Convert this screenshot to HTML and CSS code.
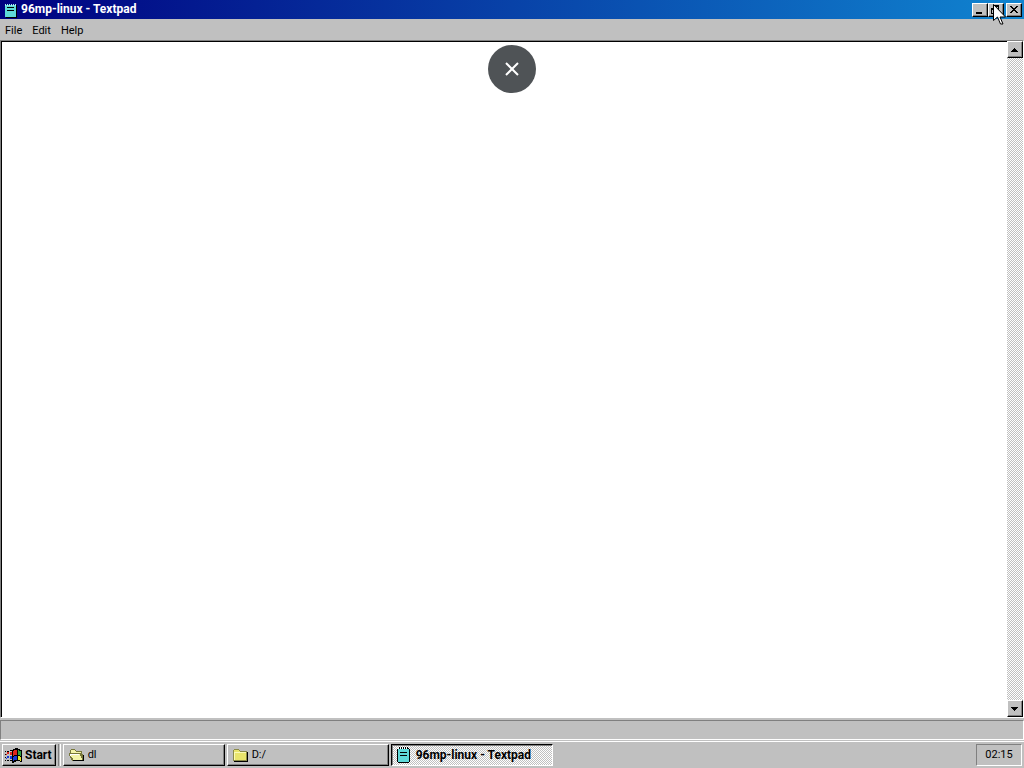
FILE: index.html
```html
<!DOCTYPE html>
<html lang="en">
<head>
    <meta charset="UTF-8">
    <meta name="viewport" content="width=device-width, initial-scale=1.0">
    <title>96mp-linux - Textpad</title>
    <link rel="stylesheet" href="styles.css">
</head>
<body>
    <main class="window">
        <header class="title-bar">
            <svg class="pad-icon" viewBox="0 0 14 16" shape-rendering="crispEdges">
                <path fill="#000" d="M2 3h11v13H2z"/>
                <path fill="#5fd9d9" d="M1 3h11v12H1z"/>
                <path fill="#a8ecec" d="M1 2h1v2H1zM3 2h1v2H3zM5 2h1v2H5zM7 2h1v2H7zM9 2h1v2H9zM11 2h1v2h-1z"/>
                <path fill="#000" d="M3 5h7v1H3zM3 8h7v1H3z"/>
            </svg>
            <h1 class="title">96mp-linux - Textpad</h1>
            <div class="window-buttons">
                <button class="raised window-button" aria-label="Minimize">
                    <svg viewBox="0 0 12 10" shape-rendering="crispEdges"><path d="M2 7h6v2H2z"/></svg>
                </button>
                <button class="raised window-button" aria-label="Restore">
                    <svg viewBox="0 0 12 10" shape-rendering="crispEdges"><path d="M3 0h6v6H7V5h1V2H4v1H3zM1 3h6v6H1zM2 5v3h4V5z" fill-rule="evenodd"/></svg>
                </button>
                <button class="raised window-button close" aria-label="Close">
                    <svg viewBox="0 0 12 10" shape-rendering="crispEdges"><path d="M2 1h2v1H2zM8 1h2v1H8zM3 2h2v1H3zM7 2h2v1H7zM4 3h4v1H4zM5 4h2v1H5zM4 5h4v1H4zM3 6h2v1H3zM7 6h2v1H7zM2 7h2v1H2zM8 7h2v1H8z"/></svg>
                </button>
            </div>
        </header>

        <nav class="menu-bar">
            <button class="menu">File</button>
            <button class="menu">Edit</button>
            <button class="menu">Help</button>
        </nav>

        <div class="editor">
            <textarea class="text" aria-label="Document text" spellcheck="false"></textarea>
            <div class="scrollbar">
                <button class="raised scroll-button" aria-label="Scroll up">
                    <svg viewBox="0 0 12 12" shape-rendering="crispEdges"><path d="M5 4h1v1h1v1h1v1h1v1H2V7h1V6h1V5h1z"/></svg>
                </button>
                <button class="raised scroll-button" aria-label="Scroll down">
                    <svg viewBox="0 0 12 12" shape-rendering="crispEdges"><path d="M2 4h7v1H8v1H7v1H6v1H5V7H4V6H3V5H2z"/></svg>
                </button>
            </div>
        </div>

        <div class="status-bar"></div>
    </main>

    <footer class="taskbar">
        <button class="raised start">
            <svg class="flag" viewBox="0 0 17 15" shape-rendering="crispEdges">
                <path fill="#000" d="M7 2h1V1h2V0h3v1h2v1h2v12h-2v-1h-4v1H9v1H7zM0 3h1v1H0zM2 3h2v1H2zM0 6h1v1H0zM0 9h1v1H0zM0 12h1v1H0zM2 12h2v1H2zM5 2h2v1H5zM5 12h2v1H5z"/>
                <path fill="#e0241c" d="M8 3h1V2h3v5H9v1H8zM5 4h2v3H5zM2 4h2v2H2zM1 6h1v1H1z"/>
                <path fill="#2ea043" d="M13 2h1v1h2v5h-1V7h-2z"/>
                <path fill="#1838d8" d="M8 9h1V8h3v4H9v1H8zM5 8h2v3H5zM2 8h2v2H2zM1 10h1v1H1z"/>
                <path fill="#e8e428" d="M13 8h2v1h1v4h-1v-1h-2z"/>
            </svg>
            <span>Start</span>
        </button>
        <span class="divider"></span>
        <div class="tasks">
            <button class="raised task">
                <svg class="folder" viewBox="0 0 17 14" shape-rendering="crispEdges">
                    <path fill="#77773a" d="M3 1h4v1h1v1h6v3h1v7H4v-1H3v-2H2V8H1V5h1V2h1z"/>
                    <path fill="#f4f4a8" d="M3 2h4v1h1v1h5v1H3zM2 6h10v2h1v2h1v2H5v-2H4V9H3V7H2z"/>
                    <path fill="#fff" d="M2 6h9v1H3v1H2z"/>
                    <path fill="#000" d="M5 13h11V7h-1v5H5z"/>
                </svg>
                <span>dl</span>
            </button>
            <button class="raised task">
                <svg class="folder" viewBox="0 0 17 14" shape-rendering="crispEdges">
                    <path fill="#8a8a48" d="M2 1h5v1h1v1h7v10H1V2h1z"/>
                    <path fill="#e9e56c" d="M2 2h5v1h1v1h6v8H2z"/>
                    <path fill="#fbfbb8" d="M2 4h12v1H3v7H2z"/>
                    <path fill="#000" d="M15 4h1v10H2v-1h13z"/>
                </svg>
                <span>D:/</span>
            </button>
            <button class="task active" aria-pressed="true">
                <svg class="task-pad" viewBox="0 0 15 18" shape-rendering="crispEdges">
                    <path fill="#000" d="M2 2h11v1h1v13h-1v1H2v-1H1V3h1z"/>
                    <path fill="#5fd9d9" d="M2 3h11v13H2z"/>
                    <path fill="#000" d="M3 1h1v2H3zM5 1h1v2H5zM7 1h1v2H7zM9 1h1v2H9zM11 1h1v2h-1zM4 6h7v1H4zM4 9h7v1H4z"/>
                    <path fill="#fff" d="M2 2h1v1H2zM4 2h1v1H4zM6 2h1v1H6zM8 2h1v1H8zM10 2h1v1h-1z"/>
                </svg>
                <span>96mp-linux - Textpad</span>
            </button>
        </div>
        <time class="clock">02:15</time>
    </footer>

    <button class="exit" aria-label="Exit full screen">
        <svg viewBox="0 0 16 16"><path d="M2 2l12 12M14 2L2 14"/></svg>
    </button>

    <svg class="cursor" viewBox="0 0 13 21">
        <path fill="#fff" stroke="#000" d="M.5 .5v16l4-3.500l3 7h2.500l-3-7h5.500z"/>
    </svg>
</body>
</html>
```

FILE: styles.css
```css
* {
    box-sizing: border-box;
}
body {
    margin: 0;
    height: 100vh;
    display: flex;
    flex-direction: column;
    overflow: hidden;
    background: #c0c0c0;
    color: #000;
    font: 11px/14px Roboto, "Liberation Sans", Arial, sans-serif;
}
button {
    margin: 0;
    padding: 0;
    border: 0;
    background: #c0c0c0;
    color: #000;
    font: inherit;
}
svg {
    display: block;
    flex: none;
}
.raised {
    border: 1px solid;
    border-color: #fff #000 #000 #fff;
    box-shadow: inset -1px -1px #808080;
}
.window {
    flex: 1;
    min-height: 0;
    display: flex;
    flex-direction: column;
}

/* title bar */
.title-bar {
    display: flex;
    align-items: center;
    height: 19px;
    padding: 0 2px 0 4px;
    background: linear-gradient(to right, #000080, #1084d0);
    color: #fff;
}
.pad-icon {
    width: 14px;
    height: 16px;
}
.title {
    flex: 1;
    margin: 0 0 0 3px;
    padding-bottom: 1px;
    font-size: 12px;
    font-weight: bold;
}
.window-buttons {
    display: flex;
}
.window-button {
    width: 16px;
    height: 14px;
    padding: 1px;
}
.window-button svg {
    width: 12px;
    height: 10px;
}
.close {
    margin-left: 2px;
}

/* menu */
.menu-bar {
    display: flex;
    height: 21px;
}
.menu {
    padding: 2px 5px 0;
}

/* editor */
.editor {
    flex: 1;
    min-height: 0;
    display: flex;
    border: 1px solid;
    border-color: #808080 #fff #fff #808080;
}
.text {
    flex: 1;
    min-width: 0;
    border: 0;
    border-top: 1px solid #000;
    border-left: 1px solid #000;
    padding: 2px;
    outline: 0;
    resize: none;
    background: #fff;
    font: inherit;
}
.scrollbar {
    display: flex;
    flex-direction: column;
    justify-content: space-between;
    width: 16px;
    background: repeating-conic-gradient(#c0c0c0 0 25%, #fff 0 50%) 0 0 / 2px 2px;
}
.scroll-button {
    width: 16px;
    height: 17px;
    padding: 1px;
}
.scroll-button svg {
    width: 12px;
    height: 12px;
}
.status-bar {
    height: 20px;
    margin-top: 2px;
    border: 1px solid;
    border-color: #808080 #fff #fff #808080;
}

/* taskbar */
.taskbar {
    display: flex;
    gap: 2px;
    height: 27px;
    margin-top: 1px;
    padding: 2px;
    border-top: 1px solid #fff;
}
.start {
    display: flex;
    align-items: center;
    gap: 3px;
    padding: 0 3px 0 2px;
    font-size: 12px;
    font-weight: bold;
}
.flag {
    width: 17px;
    height: 15px;
}
.divider {
    width: 3px;
    border-left: 1px solid #808080;
    border-right: 1px solid #fff;
}
.tasks {
    flex: 1;
    min-width: 0;
    display: flex;
    gap: 2px;
}
.task {
    display: flex;
    align-items: center;
    gap: 3px;
    flex: 0 1 162px;
    min-width: 0;
    padding: 0 4px;
    white-space: nowrap;
    overflow: hidden;
}
.folder {
    width: 17px;
    height: 14px;
}
.active {
    gap: 5px;
    border: 1px solid;
    border-color: #000 #fff #fff #000;
    box-shadow: inset 1px 1px #808080;
    background: repeating-conic-gradient(#c0c0c0 0 25%, #fff 0 50%) 0 0 / 2px 2px;
    font-size: 12px;
    font-weight: bold;
}
.task-pad {
    width: 15px;
    height: 18px;
}
.clock {
    display: flex;
    align-items: center;
    justify-content: center;
    min-width: 46px;
    border: 1px solid;
    border-color: #808080 #fff #fff #808080;
}

/* overlays */
.exit {
    position: absolute;
    top: 45px;
    left: calc(50% - 24px);
    display: grid;
    place-items: center;
    width: 48px;
    height: 48px;
    border-radius: 50%;
    background: #4f5356;
}
.exit svg {
    width: 16px;
    height: 16px;
    fill: none;
    stroke: #fff;
    stroke-width: 2;
}
.cursor {
    position: absolute;
    top: 4px;
    right: 18px;
    width: 13px;
    height: 21px;
    pointer-events: none;
}
```
